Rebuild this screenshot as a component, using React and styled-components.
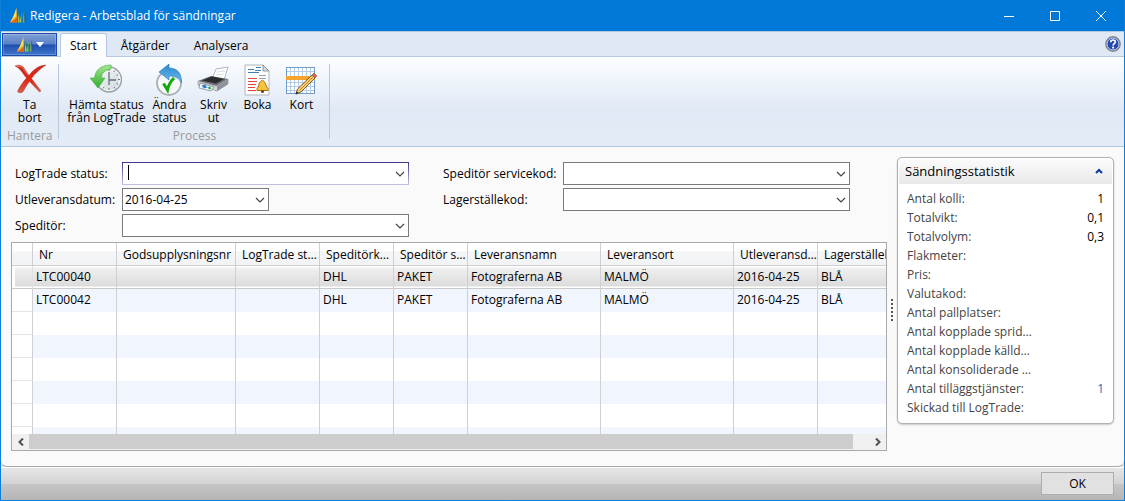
import React, { useState } from "react";
import styled, { createGlobalStyle, css } from "styled-components";

const GlobalStyle = createGlobalStyle`
  * {
    box-sizing: border-box;
  }
  body {
    margin: 0;
    color: #000;
    font: 12px/16px "Open Sans", sans-serif;
  }
  button,
  select {
    font: inherit;
    color: inherit;
  }
`;

const Window = styled.div`
  display: flex;
  flex-direction: column;
  height: 100vh;
  border: 1px solid #0f7fd8;
  border-top: 0;
  background: #0078d7;
`;

const TitleBar = styled.header`
  display: flex;
  align-items: center;
  flex: none;
  height: 31px;
  padding-left: 8px;
  gap: 3px;
  color: #fff;
`;

const Title = styled.h1`
  flex: 1;
  margin: 0;
  font-size: 12px;
  font-weight: 400;
`;

const WindowButtons = styled.div`
  display: flex;
`;

const WindowButton = styled.button`
  display: flex;
  align-items: center;
  justify-content: center;
  width: 46px;
  height: 30px;
  padding: 0;
  border: 0;
  background: none;
  color: #fff;
  &:hover {
    background: rgba(255, 255, 255, 0.15);
  }
`;

const TabBar = styled.nav`
  display: flex;
  align-items: flex-end;
  flex: none;
  height: 26px;
  padding: 0 3px 0 1px;
  border-top: 1px solid #b4c8e2;
  border-bottom: 1px solid #b6c8e0;
  background: #dfe8f5;
`;

const AppButton = styled.button`
  display: flex;
  align-items: center;
  justify-content: center;
  gap: 2px;
  width: 55px;
  height: 23px;
  margin-right: 3px;
  padding: 0;
  border: 1px solid #1c4aa8;
  background: linear-gradient(#7f9fd6, #5a80c6 48%, #1f4fae 52%, #3f76cc);
  box-shadow: inset 0 0 0 1px rgba(255, 255, 255, 0.2);
`;

const Tabs = styled.div`
  display: flex;
  flex: 1;
  gap: 4px;
`;

const Tab = styled.button`
  height: 24px;
  margin-bottom: -1px;
  padding: 0 9px;
  border: 1px solid transparent;
  border-bottom: 0;
  border-radius: 3px 3px 0 0;
  background: none;
  ${({ $active }) =>
    $active &&
    css`
      border-color: #b6c8e0;
      background: #fcfdff;
    `}
`;

const HelpButton = styled.button`
  display: flex;
  align-self: center;
  padding: 0;
  border: 0;
  background: none;
`;

const Ribbon = styled.div`
  display: flex;
  flex: none;
  height: 90px;
  padding: 7px 0 0;
  border-bottom: 1px solid #b0c8e0;
  background: linear-gradient(#fcfdff, #eff4fb 28%, #e0e9f5 60%, #e4ecf7);
`;

const Group = styled.section`
  display: flex;
  flex-direction: column;
  justify-content: space-between;
  height: 75px;
  padding: 0 6px;
  border-right: 1px solid #b8c8dc;
`;

const GroupLabel = styled.div`
  color: #9a9a9a;
  text-align: center;
  line-height: 6px;
`;

const Actions = styled.div`
  display: flex;
  align-items: flex-start;
  justify-content: center;
`;

const Action = styled.button`
  display: flex;
  flex-direction: column;
  align-items: center;
  width: ${({ $wide }) => ($wide ? 82 : 44)}px;
  padding: 0;
  border: 0;
  background: none;
  line-height: 13px;
  white-space: pre;
  svg {
    margin-bottom: 2px;
  }
`;

const Lower = styled.div`
  display: flex;
  flex-direction: column;
  flex: 1;
  min-height: 0;
  background: #e6e6e6;
`;

const Content = styled.main`
  display: flex;
  flex: 1;
  min-height: 0;
  padding: 10px 10px 15px;
  border-bottom: 1px solid #a9a9a9;
  border-radius: 0 0 6px 6px;
  background: #fafafa;
`;

const Worksheet = styled.div`
  display: flex;
  flex-direction: column;
  flex: 1;
  min-width: 0;
  min-height: 0;
`;

const Filters = styled.form`
  display: grid;
  grid-template-columns: 107px 287px 34px 120px 287px;
  grid-auto-rows: 23px;
  row-gap: 3px;
  align-items: center;
  padding: 5px 4px;
`;

const Label = styled.label`
  grid-column: ${({ $column }) => $column};
  grid-row: ${({ $row }) => $row};
  white-space: nowrap;
`;

const Combo = styled.div`
  grid-column: ${({ $column }) => $column};
  grid-row: ${({ $row }) => $row};
  position: relative;
  width: ${({ $narrow }) => ($narrow ? "147px" : "100%")};
  > svg {
    position: absolute;
    right: 4px;
    top: 9px;
    pointer-events: none;
  }
`;

const Select = styled.select`
  display: block;
  appearance: none;
  width: 100%;
  height: 23px;
  padding: 0 20px 0 2px;
  border: 1px solid #7a7a7a;
  border-radius: 0;
  outline: 0;
  background: #fff;
  ${({ $current }) =>
    $current &&
    css`
      border-image: linear-gradient(#43348a, #c6c1e0) 1;
    `}
`;

const Caret = styled.span`
  position: absolute;
  left: 6px;
  top: 3px;
  width: 1px;
  height: 15px;
  background: #000;
`;

const Grid = styled.div`
  display: flex;
  flex-direction: column;
  flex: 1;
  min-height: 0;
  border: 1px solid #a9a9a9;
  background: #fff;
`;

const Rows = styled.div`
  flex: 1;
  min-height: 0;
  overflow: hidden;
`;

const Table = styled.table`
  width: 100%;
  table-layout: fixed;
  border-collapse: separate;
  border-spacing: 0;
`;

const Th = styled.th`
  height: 23px;
  padding: 1px 0 0 6px;
  border-right: 1px solid #cfcfd4;
  border-bottom: 1px solid #cfcfd4;
  background: linear-gradient(#fff 36%, #f5f6f8 40%, #f2f3f5);
  font-weight: 400;
  text-align: left;
  white-space: nowrap;
  overflow: hidden;
  text-overflow: ellipsis;
  &:last-child {
    border-right: 0;
    text-overflow: clip;
  }
`;

const Td = styled.td`
  height: 23px;
  padding: 0 0 1px 3px;
  border-right: 1px solid #cfcfd4;
  white-space: nowrap;
  overflow: hidden;
  &:first-child {
    border-bottom: 1px solid #e4e4e4;
    background: #fff;
  }
  &:last-child {
    border-right: 0;
  }
`;

const Tr = styled.tr`
  background: #fff;
  &:nth-child(even) {
    background: #f1f5fe;
  }
  ${({ $selected }) =>
    $selected &&
    css`
      ${Td} {
        padding-bottom: 0;
        border-bottom: 1px solid #cacaca;
        background: linear-gradient(#fff 1px, #f0f0f0 2px, #dcdcdc 20px, #fff 21px);
      }
      ${Td}:first-child {
        background: linear-gradient(#fff 1px, #f0f0f0 2px, #dcdcdc 20px, #fff 21px)
          3px 0 no-repeat;
        border-right-color: #e0e0e0;
      }
    `}
`;

const ScrollBar = styled.div`
  display: flex;
  flex: none;
  height: 16px;
  background: #f0f0f0;
`;

const ScrollButton = styled.button`
  display: flex;
  align-items: center;
  justify-content: center;
  width: 17px;
  padding: 0;
  border: 0;
  background: none;
`;

const ScrollTrack = styled.div`
  flex: 1;
  padding: 0 16px 1px 0;
`;

const ScrollThumb = styled.div`
  height: 100%;
  background: #cdcdcd;
`;

const Splitter = styled.div`
  flex: none;
  align-self: flex-start;
  width: 2px;
  height: 22px;
  margin: 142px 4px 0;
  background: repeating-linear-gradient(#555 0 2px, transparent 2px 4px);
`;

const FactBox = styled.aside`
  flex: none;
  align-self: flex-start;
  width: 217px;
  padding: 1px;
  border: 1px solid #b0b0b0;
  border-radius: 5px;
  background: #fff;
  box-shadow: 0 1px 2px rgba(0, 0, 0, 0.2);
`;

const FactHeader = styled.button`
  display: flex;
  align-items: center;
  justify-content: space-between;
  width: 100%;
  height: 25px;
  padding: 0 9px 2px 6px;
  border: 0;
  border-radius: 4px 4px 0 0;
  background: linear-gradient(#fbfbfb, #e9e9e9);
  font-size: 13px;
`;

const Facts = styled.dl`
  margin: 0;
  padding: 5px 8px;
`;

const Fact = styled.div`
  display: flex;
  justify-content: space-between;
  height: 19px;
  line-height: 19px;
  color: #444;
`;

const FactName = styled.dt`
  width: 128px;
  overflow: hidden;
  text-overflow: ellipsis;
  white-space: nowrap;
`;

const FactValue = styled.dd`
  margin: 0;
  color: #000;
  a {
    color: #2a66c8;
    text-decoration: none;
  }
`;

const Footer = styled.footer`
  display: flex;
  justify-content: flex-end;
  flex: none;
  height: 33px;
  padding: 4px 10px;
  border-top: 1px solid #fff;
  background: linear-gradient(#e5e5e5, #d3d3d3 50%, #c6c6c6 50%, #b5b5b5);
`;

const OkButton = styled.button`
  width: 73px;
  height: 23px;
  padding: 0;
  border: 1px solid #adadad;
  background: #e1e1e1;
`;

const Logo = () => (
  <svg width="18" height="17" viewBox="0 0 18 17" aria-hidden="true">
    <path d="M7.500 1l.8 14.500H1C4 11 6 6 7.500 1z" fill="#f59a1c" />
    <path d="M7.300 1v8L1 15.500C4 11 6 6 7.300 1z" fill="#ffe25c" />
    <path d="M8 10.500v5H1c3-1 5-3 7-5z" fill="#e0601c" />
    <path d="M8.500 5c2 2 3 6 3 10.500h-3z" fill="#2c8a5c" />
    <path d="M9 8c1 2 1.500 5 1.500 7.500H9z" fill="#a6cf4c" />
    <path d="M12.500 6v9.500h-1.300c.2-3 .5-6 1.300-9.500z" fill="#d6e25a" />
    <path d="M12.500 7c1 2 1.300 5 1.200 8.500h-1.200z" fill="#2f6f90" />
    <path d="M15.300 3.500l.7 11.500-2 .8c0-4 .3-8 1.300-12.300z" fill="#7dbb4a" />
    <path d="M15.300 3.500c.8 3 1.200 7 1.200 11.500h-1z" fill="#1f4f8c" />
  </svg>
);

const DeleteIcon = () => (
  <svg width="32" height="32" viewBox="0 0 32 32" aria-hidden="true">
    <defs>
      <linearGradient id="red" x1="0" y1="0" x2="0" y2="1">
        <stop offset="0" stopColor="#c83020" />
        <stop offset="0.5" stopColor="#e02410" />
        <stop offset="1" stopColor="#d06050" />
      </linearGradient>
    </defs>
    <path
      d="M1 2c4-1.500 7-1 9 2l5 7.500C19 6 24 1.500 32 1c-6 4-11 8.500-14.500 13.500L27 27l-1.500 1L15.500 17.500c-3 4-4.500 7-6 9.500-1 2-5 2.500-6 .5 2-5 5.500-9.500 9-13.500C9 10 6 4 1 2z"
      fill="url(#red)"
      stroke="#b8301c"
      strokeWidth="0.4"
    />
    <path d="M3 2.500c3-.6 5 0 6.500 2.200L14 11" fill="none" stroke="#f08c78" strokeWidth="0.8" />
  </svg>
);

const HistoryIcon = () => (
  <svg width="32" height="32" viewBox="0 0 32 32" aria-hidden="true">
    <defs>
      <linearGradient id="green" x1="0" y1="0" x2="0" y2="1">
        <stop offset="0" stopColor="#a4e890" />
        <stop offset="1" stopColor="#2fae2a" />
      </linearGradient>
      <linearGradient id="face" x1="0" y1="0" x2="1" y2="1">
        <stop offset="0" stopColor="#fafbfc" />
        <stop offset="1" stopColor="#ccd4d8" />
      </linearGradient>
    </defs>
    <circle cx="19" cy="15.500" r="12.500" fill="url(#face)" stroke="#9aa2a6" strokeWidth="1.400" />
    <circle cx="19" cy="15.500" r="11" fill="none" stroke="#fff" strokeWidth="0.8" />
    <path
      d="M19 5v2M19 24v2M28 15.500h2M25 6.500l-1 1.500M28 10.500l-1.500 1M28 20.500l-1.500-1M25 24.500l-1-1.500M13 24.500l1-1.500"
      stroke="#6b7a83"
    />
    <path d="M19 8v8h7M19 16v5" fill="none" stroke="#5f7380" strokeWidth="1.300" />
    <path
      d="M21 1C12 1 5.500 5 4.500 14H0l8 10 7-10h-3.500c0-5 3-8 9.500-9z"
      fill="url(#green)"
      stroke="#48a848"
      strokeWidth="0.6"
    />
  </svg>
);

const ChangeIcon = () => (
  <svg width="32" height="32" viewBox="0 0 32 32" aria-hidden="true">
    <defs>
      <linearGradient id="blue" x1="0" y1="0" x2="0" y2="1">
        <stop offset="0" stopColor="#2a86cc" />
        <stop offset="1" stopColor="#6cbcf0" />
      </linearGradient>
    </defs>
    <circle cx="16" cy="19" r="12" fill="#f6f7f8" stroke="#aab0b4" strokeWidth="1.8" />
    <path
      d="M10.500 19.500l4 6.500c1-5 3.500-9 6.500-12"
      fill="none"
      stroke="#14a80c"
      strokeWidth="3"
    />
    <path
      d="M6 8l10-8v4c8 0 13 5 12.500 15-2.500-5-6-7-12.500-7v4z"
      fill="url(#blue)"
      stroke="#2478b8"
      strokeWidth="0.6"
    />
  </svg>
);

const PrinterIcon = () => (
  <svg width="32" height="32" viewBox="0 0 32 32" aria-hidden="true">
    <path d="M15 15l4-10 12-2-4 13z" fill="#fff" stroke="#9aa4ae" strokeWidth="0.8" />
    <path d="M20 8l8-1M19 11l8-1" stroke="#d8dee4" />
    <path d="M1 17l13-5 17 3-11 7z" fill="#6a6c70" />
    <path d="M5 16.500l10-4 12 2.500-8 4.500z" fill="#2b2c30" />
    <path d="M1 17l18 5 12-7v5l-11 7-19-6z" fill="#d4d6da" stroke="#85888e" strokeWidth="0.6" />
    <path d="M20 22v5l11-7v-5z" fill="#8f9298" />
    <path d="M3 19l14 4-3 4-12-3z" fill="#f4f8fc" stroke="#5a6674" strokeWidth="0.6" />
    <path d="M4.500 21.500l4-1 1.500 3-3 1z" fill="#2f7fd0" />
    <path d="M10 23.500l3-1 1.500 2-2 1z" fill="#38a858" />
  </svg>
);

const PostIcon = () => (
  <svg width="32" height="32" viewBox="0 0 32 32" aria-hidden="true">
    <path d="M4 1h18l6 6v24H4z" fill="#fdfdfd" stroke="#b0b6bc" />
    <path d="M22 1v6h6z" fill="#d8dde2" stroke="#7a848e" strokeWidth="0.8" />
    <path d="M7 5.500h6M15 3.500h5M7 8.500h11M14 6.500h6" stroke="#3f7fb0" />
    <path
      d="M7 14.500h9M7 17.500h9M7 20.500h8M7 23.500h7M7 26.500h8"
      stroke="#e0483c"
    />
    <path d="M18 14.500h7M18 11.500h7" stroke="#9aa2aa" />
    <path
      d="M19.500 17.500c1-1.500 3-1.500 3.500 0 2.500 2 1.500 5.500 4 7v2H16v-2c2.500-1.500 1-5 3.500-7z"
      fill="#f8c43c"
      stroke="#a8700c"
    />
    <circle cx="21.500" cy="27.500" r="1.500" fill="#6b3d08" />
  </svg>
);

const CardIcon = () => (
  <svg width="32" height="32" viewBox="0 0 32 32" aria-hidden="true">
    <rect x="1.500" y="3.500" width="28" height="26" fill="#fff" stroke="#6f9cc8" />
    <path
      d="M5.500 4v25M9.500 4v25M13.500 4v25M17.500 4v25M21.500 4v25M25.500 4v25M2 7.500h27M2 18.500h27M2 22.500h27M2 26.500h27"
      stroke="#b4cce4"
    />
    <rect x="1" y="12" width="29" height="4" fill="#f8a42c" />
    <path d="M27 11l3 3-14 14-5 2 1.500-5z" fill="#f6cf72" stroke="#6b4a24" strokeWidth="0.9" />
    <path d="M28.500 12.500L14.500 26.500" stroke="#c08828" />
    <path d="M27 11l2-2 3 3-2 2z" fill="#e0604c" stroke="#8a5048" strokeWidth="0.5" />
    <path d="M10.500 30.500l1-3 2 1.500z" fill="#222" />
  </svg>
);

const Chevron = () => (
  <svg width="10" height="6" viewBox="0 0 10 6" aria-hidden="true">
    <path d="M1 1l4 4 4-4" fill="none" stroke="#444" strokeWidth="1.2" />
  </svg>
);

const HelpIcon = () => (
  <svg width="16" height="16" viewBox="0 0 16 16" aria-hidden="true">
    <circle cx="8" cy="8" r="7.200" fill="#2448b0" stroke="#85888f" strokeWidth="1.400" />
    <circle cx="8" cy="8" r="6" fill="none" stroke="#dfe5f2" strokeWidth="0.900" />
    <path
      d="M5.700 6.200C5.700 3.200 10.500 3.400 10.300 6c-.1 1.600-2.200 1.800-2.200 3.400"
      fill="none"
      stroke="#fff"
      strokeWidth="1.700"
    />
    <circle cx="8.100" cy="11.600" r="1.100" fill="#fff" />
  </svg>
);

const columns = [
  ["Nr", 84],
  ["Godsupplysningsnr", 119],
  ["LogTrade status", 84],
  ["Speditörkod", 74],
  ["Speditör servicekod", 74],
  ["Leveransnamn", 133],
  ["Leveransort", 133],
  ["Utleveransdatum", 84],
  ["Lagerställekod"],
];

const shipments = [
  ["LTC00040", "", "", "DHL", "PAKET", "Fotograferna AB", "MALMÖ", "2016-04-25", "BLÅ"],
  ["LTC00042", "", "", "DHL", "PAKET", "Fotograferna AB", "MALMÖ", "2016-04-25", "BLÅ"],
];

const emptyRows = new Array(12).fill(new Array(columns.length).fill(""));

const filters = [
  { id: "status", label: "LogTrade status:", column: 1, row: 1, current: true },
  { id: "date", label: "Utleveransdatum:", column: 1, row: 2, value: "2016-04-25", narrow: true },
  { id: "agent", label: "Speditör:", column: 1, row: 3 },
  { id: "service", label: "Speditör servicekod:", column: 4, row: 1 },
  { id: "location", label: "Lagerställekod:", column: 4, row: 2 },
];

const facts = [
  ["Antal kolli:", "1"],
  ["Totalvikt:", "0,1"],
  ["Totalvolym:", "0,3"],
  ["Flakmeter:"],
  ["Pris:"],
  ["Valutakod:"],
  ["Antal pallplatser:"],
  ["Antal kopplade spridningar:"],
  ["Antal kopplade källdokument:"],
  ["Antal konsoliderade sändningar:"],
  ["Antal tilläggstjänster:", "1", true],
  ["Skickad till LogTrade:"],
];

const actions = [
  { text: "Hämta status\nfrån LogTrade", Icon: HistoryIcon, wide: true },
  { text: "Ändra\nstatus", Icon: ChangeIcon },
  { text: "Skriv\nut", Icon: PrinterIcon },
  { text: "Boka", Icon: PostIcon },
  { text: "Kort", Icon: CardIcon },
];

const App = () => {
  const [activeTab, setActiveTab] = useState("Start");
  const [selectedRow, setSelectedRow] = useState(0);
  const [open, setOpen] = useState(true);

  return (
    <Window>
      <GlobalStyle />
      <TitleBar>
        <Logo />
        <Title>Redigera - Arbetsblad för sändningar</Title>
        <WindowButtons>
          <WindowButton aria-label="Minimera">
            <svg width="10" height="10">
              <path d="M0 5.500h10" stroke="currentColor" />
            </svg>
          </WindowButton>
          <WindowButton aria-label="Maximera">
            <svg width="10" height="10">
              <path d="M.5.5h9v9h-9z" fill="none" stroke="currentColor" />
            </svg>
          </WindowButton>
          <WindowButton aria-label="Stäng">
            <svg width="10" height="10">
              <path d="M0 0l10 10M10 0L0 10" stroke="currentColor" />
            </svg>
          </WindowButton>
        </WindowButtons>
      </TitleBar>
      <TabBar>
        <AppButton aria-label="Meny">
          <Logo />
          <svg width="8" height="5">
            <path d="M0 0h8L4 5z" fill="#fff" />
          </svg>
        </AppButton>
        <Tabs>
          {["Start", "Åtgärder", "Analysera"].map((tab) => (
            <Tab key={tab} $active={tab === activeTab} onClick={() => setActiveTab(tab)}>
              {tab}
            </Tab>
          ))}
        </Tabs>
        <HelpButton aria-label="Hjälp">
          <HelpIcon />
        </HelpButton>
      </TabBar>
      <Ribbon>
        <Group>
          <Actions>
            <Action>
              <DeleteIcon />
              {"Ta\nbort"}
            </Action>
          </Actions>
          <GroupLabel>Hantera</GroupLabel>
        </Group>
        <Group>
          <Actions>
            {actions.map(({ text, Icon, wide }) => (
              <Action key={text} $wide={wide}>
                <Icon />
                {text}
              </Action>
            ))}
          </Actions>
          <GroupLabel>Process</GroupLabel>
        </Group>
      </Ribbon>
      <Lower>
        <Content>
          <Worksheet>
            <Filters>
              {filters.map(({ id, label, column, row, value, narrow, current }) => (
                <React.Fragment key={id}>
                  <Label htmlFor={id} $column={column} $row={row}>
                    {label}
                  </Label>
                  <Combo $column={column + 1} $row={row} $narrow={narrow}>
                    <Select id={id} $current={current}>
                      <option>{value}</option>
                    </Select>
                    {current && <Caret />}
                    <Chevron />
                  </Combo>
                </React.Fragment>
              ))}
            </Filters>
            <Grid>
              <Rows>
                <Table>
                  <colgroup>
                    <col width="21" />
                    {columns.map(([name, width]) => (
                      <col key={name} width={width} />
                    ))}
                  </colgroup>
                  <thead>
                    <tr>
                      <Th />
                      {columns.map(([name]) => (
                        <Th key={name}>{name}</Th>
                      ))}
                    </tr>
                  </thead>
                  <tbody>
                    {[...shipments, ...emptyRows].map((cells, i) => (
                      <Tr key={i} $selected={i === selectedRow} onClick={() => setSelectedRow(i)}>
                        <Td />
                        {cells.map((cell, j) => (
                          <Td key={j}>{cell}</Td>
                        ))}
                      </Tr>
                    ))}
                  </tbody>
                </Table>
              </Rows>
              <ScrollBar>
                <ScrollButton aria-label="Vänster">
                  <svg width="6" height="8">
                    <path d="M5 0.500L1.500 4 5 7.500" fill="none" stroke="#505050" strokeWidth="2" />
                  </svg>
                </ScrollButton>
                <ScrollTrack>
                  <ScrollThumb />
                </ScrollTrack>
                <ScrollButton aria-label="Höger">
                  <svg width="6" height="8">
                    <path d="M1 0.500L4.500 4 1 7.500" fill="none" stroke="#505050" strokeWidth="2" />
                  </svg>
                </ScrollButton>
              </ScrollBar>
            </Grid>
          </Worksheet>
          <Splitter />
          <FactBox>
            <FactHeader onClick={() => setOpen(!open)}>
              Sändningsstatistik
              <svg width="8" height="6">
                <path d="M1 5l3-3 3 3" fill="none" stroke="#0c3a9c" strokeWidth="2" />
              </svg>
            </FactHeader>
            {open && (
              <Facts>
                {facts.map(([name, value, link]) => (
                  <Fact key={name}>
                    <FactName>{name}</FactName>
                    <FactValue>{link ? <a href="#tjanster">{value}</a> : value}</FactValue>
                  </Fact>
                ))}
              </Facts>
            )}
          </FactBox>
        </Content>
        <Footer>
          <OkButton>OK</OkButton>
        </Footer>
      </Lower>
    </Window>
  );
};

export default App;
